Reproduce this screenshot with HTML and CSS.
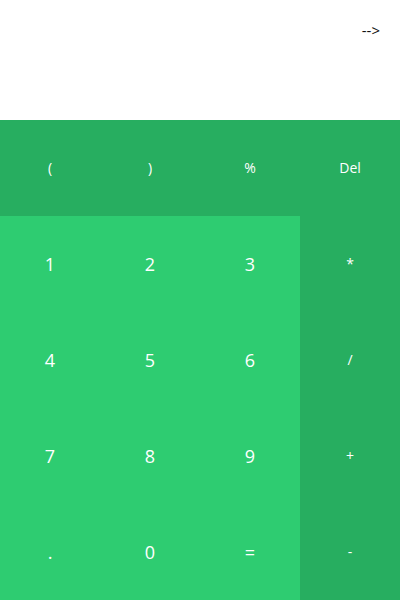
FILE: index.html
```html
<!DOCTYPE html>
<html>
<head>
<meta charset="utf-8">
<link rel="stylesheet" href="styles.css">
</head>
<body>
<div class="calc">
  <div class="display"><span class="result">--&gt;</span></div>
  <div class="keys">
    <button class="key op">(</button>
    <button class="key op">)</button>
    <button class="key op">%</button>
    <button class="key op">Del</button>
    <button class="key num">1</button>
    <button class="key num">2</button>
    <button class="key num">3</button>
    <button class="key op">*</button>
    <button class="key num">4</button>
    <button class="key num">5</button>
    <button class="key num">6</button>
    <button class="key op">/</button>
    <button class="key num">7</button>
    <button class="key num">8</button>
    <button class="key num">9</button>
    <button class="key op">+</button>
    <button class="key num">.</button>
    <button class="key num">0</button>
    <button class="key num">=</button>
    <button class="key op">-</button>
  </div>
</div>
</body>
</html>
```
FILE: styles.css
```css
html, body {
  margin: 0;
  padding: 0;
  width: 400px;
  height: 600px;
  overflow: hidden;
  background: #ffffff;
  font-family: "Open Sans", "Noto Sans", sans-serif;
}
.calc {
  display: flex;
  flex-direction: column;
  height: 600px;
}
.display {
  height: 120px;
  display: flex;
  justify-content: flex-end;
  align-items: flex-start;
  padding: 19px 20px 0 0;
  box-sizing: border-box;
}
.result {
  font-size: 15px;
  color: #111;
  line-height: 22px;
}
.keys {
  flex: 1;
  display: grid;
  grid-template-columns: repeat(4, 100px);
  grid-template-rows: repeat(5, 96px);
}
.key {
  border: none;
  margin: 0;
  padding: 0 0 1px 0;
  color: #ffffff;
  font-family: inherit;
  display: flex;
  align-items: center;
  justify-content: center;
}
.num {
  background: #2ecc71;
  font-size: 18px;
}
.op {
  background: #27ae60;
  font-size: 14px;
}
```
